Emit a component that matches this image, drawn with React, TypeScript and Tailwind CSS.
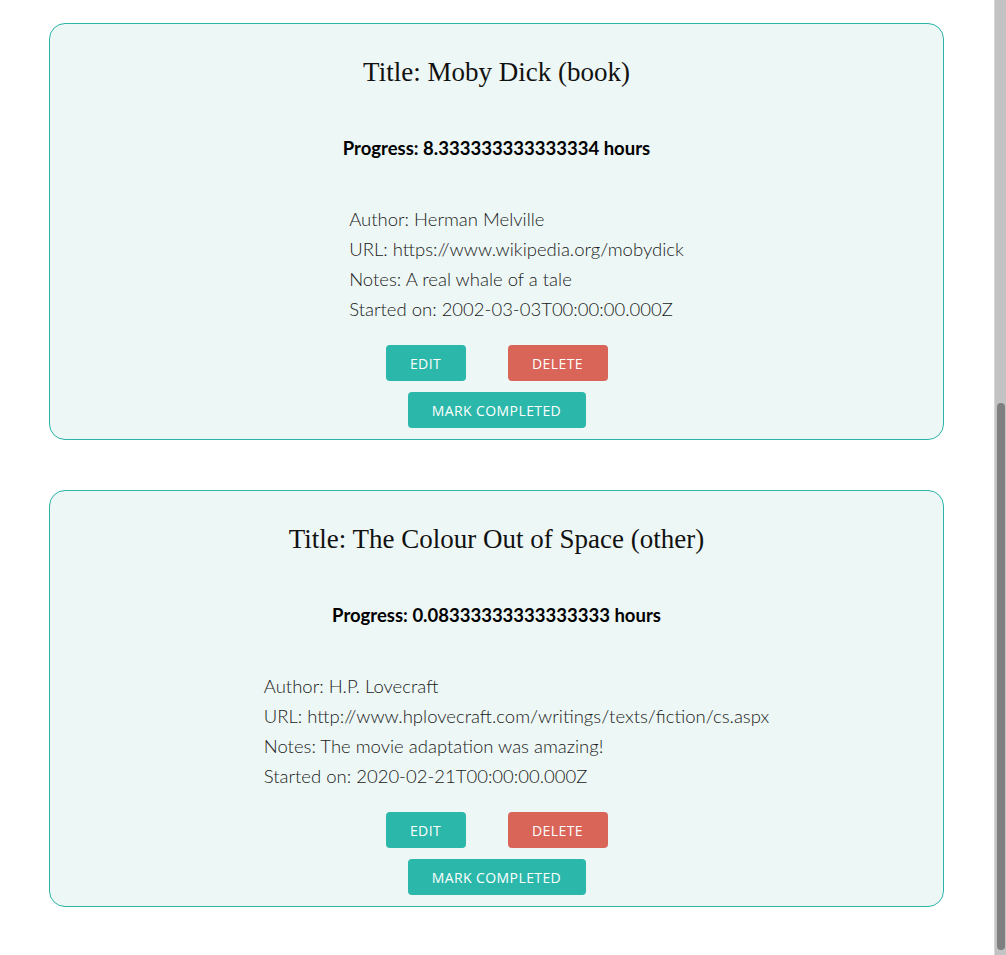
import React from 'react'

type Entry = {
  title: string
  kind: string
  progress: string
  author: string
  url: string
  notes: string
  started: string
}

const entries: Entry[] = [
  {
    title: 'Moby Dick',
    kind: 'book',
    progress: '8.333333333333334',
    author: 'Herman Melville',
    url: 'https://www.wikipedia.org/mobydick',
    notes: 'A real whale of a tale',
    started: '2002-03-03T00:00:00.000Z',
  },
  {
    title: 'The Colour Out of Space',
    kind: 'other',
    progress: '0.08333333333333333',
    author: 'H.P. Lovecraft',
    url: 'http://www.hplovecraft.com/writings/texts/fiction/cs.aspx',
    notes: 'The movie adaptation was amazing!',
    started: '2020-02-21T00:00:00.000Z',
  },
]

function EntryCard({ entry }: { entry: Entry }) {
  return (
    <div className="w-[895px] flex flex-col items-center rounded-[16px] border border-[#2bb5a8] bg-[#edf7f5] pt-[32px] pb-[11px]">
      <h2 className="font-['Liberation_Serif',serif] text-[27px] leading-[32px] text-[#111]">
        Title: {entry.title} ({entry.kind})
      </h2>
      <h3 className="mt-[48px] font-['Lato',sans-serif] font-bold text-[18.5px] leading-[24px] text-black">
        Progress: {entry.progress} hours
      </h3>

      {/* details list, left aligned but centred as a block */}
      <ul className="mt-[44px] inline-block pl-[40px] text-left font-['Lato',sans-serif] font-light text-[18.5px] leading-[30px] text-[#1a1a1a]">
        <li>Author: {entry.author}</li>
        <li>URL: {entry.url}</li>
        <li>Notes: {entry.notes}</li>
        <li>Started on: {entry.started}</li>
      </ul>

      <div className="mt-[21px] flex gap-[42px]">
        <button className="h-[36px] w-[80px] rounded-[4px] bg-[#2bb7aa] font-['Open_Sans',sans-serif] text-[14px] tracking-[0.4px] font-medium uppercase text-white">
          Edit
        </button>
        <button className="h-[36px] w-[100px] rounded-[4px] bg-[#d96458] font-['Open_Sans',sans-serif] text-[14px] tracking-[0.4px] font-medium uppercase text-white">
          Delete
        </button>
      </div>
      <button className="mt-[11px] h-[36px] w-[178px] rounded-[4px] bg-[#2bb7aa] font-['Open_Sans',sans-serif] text-[14px] tracking-[0.4px] font-medium uppercase text-white">
        Mark Completed
      </button>
    </div>
  )
}

export default function App() {
  return (
    <div className="flex h-[955px] overflow-hidden bg-white">
      <main className="flex-1 flex flex-col gap-[50px] pt-[23px] pl-[49px]">
        {entries.map((e) => (
          <EntryCard key={e.title} entry={e} />
        ))}
      </main>
      {/* scrollbar, page is scrolled to the bottom */}
      <div className="w-[12px] flex flex-col items-center bg-[#c3c3c3] border-l border-[#d6d6d6] pt-[403px] pb-[5px]">
        <div className="flex-1 w-[8px] rounded-full bg-[#7e807f]" />
      </div>
    </div>
  )
}
